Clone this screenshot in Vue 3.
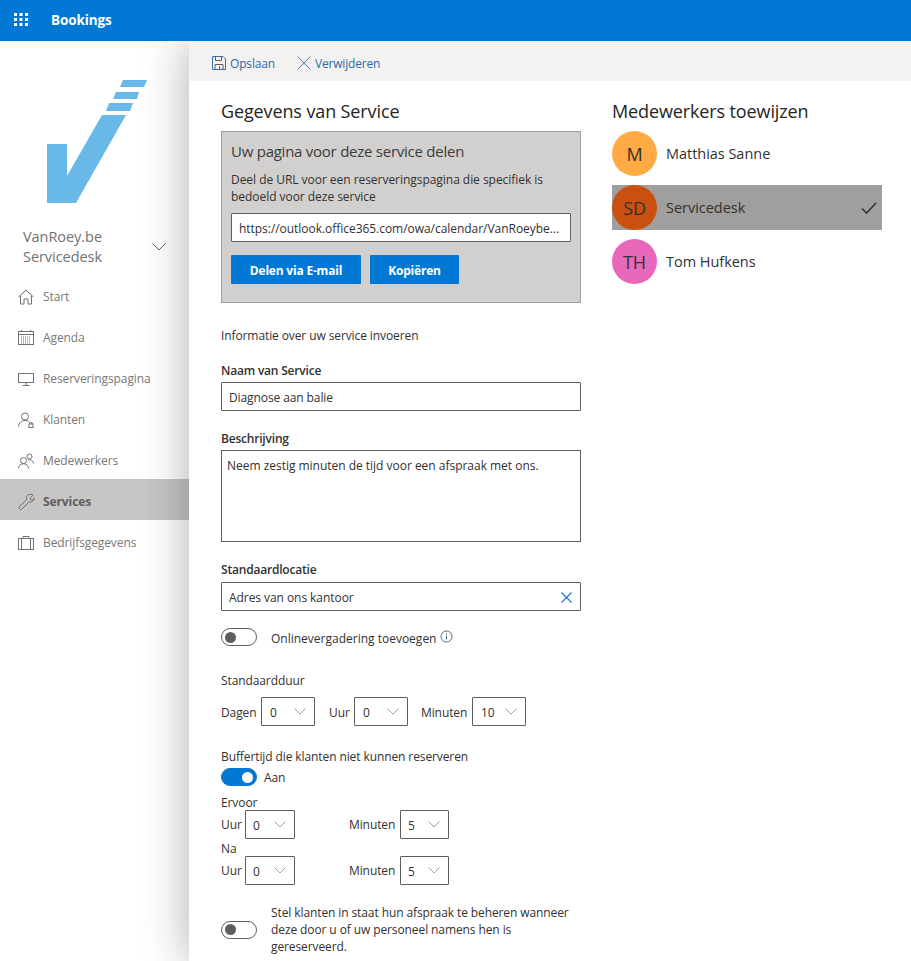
<script setup>
const nav = [
  { label: 'Start', icon: 'home' },
  { label: 'Agenda', icon: 'cal' },
  { label: 'Reserveringspagina', icon: 'screen' },
  { label: 'Klanten', icon: 'client' },
  { label: 'Medewerkers', icon: 'people' },
  { label: 'Services', icon: 'wrench', active: true },
  { label: 'Bedrijfsgegevens', icon: 'case' }
]
const staff = [
  { initials: 'M', name: 'Matthias Sanne', color: '#ffaa44' },
  { initials: 'SD', name: 'Servicedesk', color: '#ca5010', selected: true },
  { initials: 'TH', name: 'Tom Hufkens', color: '#e767bb' }
]
</script>

<template>
  <div class="app">
    <header class="topbar">
      <svg class="waffle" width="16" height="14" viewBox="0 0 16 14">
        <g fill="#fff">
          <rect x="1" y="0" width="3" height="3" /><rect x="6.5" y="0" width="3" height="3" /><rect x="12" y="0" width="3" height="3" />
          <rect x="1" y="5" width="3" height="3" /><rect x="6.5" y="5" width="3" height="3" /><rect x="12" y="5" width="3" height="3" />
          <rect x="1" y="10" width="3" height="3" /><rect x="6.5" y="10" width="3" height="3" /><rect x="12" y="10" width="3" height="3" />
        </g>
      </svg>
      <span class="brand">Bookings</span>
    </header>

    <div class="body">
      <aside class="sidebar">
        <svg class="logo" width="100" height="123" viewBox="0 0 100 123">
          <g fill="#68b8e8">
            <polygon points="0,64 20,64 20,96 55,35 79,35 29,123 0,123" />
            <polygon points="59,31 83,31 86,23 62,23" />
            <polygon points="66,19 90,19 92,12 69,12" />
            <polygon points="73,7 97,7 100,0 76,0" />
          </g>
        </svg>
        <div class="biz">
          <div class="biz-name">VanRoey.be<br />Servicedesk</div>
          <svg class="biz-chev" width="14" height="8" viewBox="0 0 14 8"><path d="M0.5 0.5 7 7 13.5 0.5" fill="none" stroke="#605e5c" /></svg>
        </div>
        <nav class="nav">
          <div v-for="item in nav" :key="item.label" class="nav-item" :class="{ active: item.active }">
            <svg class="nav-icon" width="18" height="18" viewBox="0 0 18 18" fill="none" stroke="#737170" stroke-width="1">
              <template v-if="item.icon === 'home'">
                <path d="M1.5 9 9 2.2 16.5 9M3.5 7.5V16H7V11H11V16H14.5V7.5" />
              </template>
              <template v-else-if="item.icon === 'cal'">
                <rect x="1.5" y="2.5" width="15" height="13" />
                <path d="M1.5 5.5H16.5M4.5 1V3M13.5 1V3" />
                <path d="M4 8H14M4 10H14M4 12H14M4 14H14" stroke-dasharray="1 1" />
              </template>
              <template v-else-if="item.icon === 'screen'">
                <rect x="1.5" y="3.5" width="15" height="9" />
                <path d="M9 12.5V15.5M5.5 15.5H12.5" />
              </template>
              <template v-else-if="item.icon === 'client'">
                <circle cx="8" cy="5.5" r="3.5" />
                <path d="M1.5 15.5C2 11.5 4.5 9.5 8 9.5C10 9.5 11.5 10 12.5 11" />
                <rect x="12" y="13" width="4" height="3.5" />
                <path d="M12.8 13V11.8H15.2V13" />
              </template>
              <template v-else-if="item.icon === 'people'">
                <circle cx="6.5" cy="8.5" r="3" />
                <circle cx="12.5" cy="4.5" r="2.5" />
                <path d="M1.5 16.5C1.5 13.5 3.5 11.8 6.5 11.8C9.5 11.8 11.2 13.5 11.5 16.5M11 8C13.5 7.2 16 8.5 16.5 11.5" />
              </template>
              <template v-else-if="item.icon === 'wrench'">
                <path d="M11 1.8C13 1 15 1.3 16 2.2L13 5.2 14 7 16.2 7.2 17 5C17.3 7.5 15 9.8 12 9L4.5 16.5C3.5 17.3 1.2 15.2 2 14L9.8 6.5C9.2 4.5 9.5 2.8 11 1.8Z" />
              </template>
              <template v-else>
                <rect x="1.5" y="4.5" width="15" height="11" />
                <path d="M4.5 4.5V15.5M13.5 4.5V15.5M6 4.5V2.5H12V4.5" />
              </template>
            </svg>
            <span>{{ item.label }}</span>
          </div>
        </nav>
      </aside>

      <main class="panel">
        <div class="commandbar">
          <span class="cmd">
            <svg width="14" height="14" viewBox="0 0 14 14" fill="none" stroke="#3a6ea5" stroke-width="1">
              <path d="M0.5 0.5H11L13.5 3V13.5H0.5Z" />
              <path d="M3.5 0.5V4.5H9.5V0.5M3 13.5V8.5H11V13.5M7.5 10V13.5" stroke="#605e5c" />
            </svg>
            Opslaan
          </span>
          <span class="cmd cmd-del">
            <svg width="14" height="14" viewBox="0 0 14 14" fill="none" stroke="#5a7fa8" stroke-width="1"><path d="M0.5 0.5 13.5 13.5M13.5 0.5 0.5 13.5" /></svg>
            Verwijderen
          </span>
        </div>

        <div class="content">
          <section class="form">
            <h2 class="heading">Gegevens van Service</h2>
            <div class="share">
              <div class="share-title">Uw pagina voor deze service delen</div>
              <p class="share-text">Deel de URL voor een reserveringspagina die specifiek is bedoeld voor deze service</p>
              <div class="field share-url">https://outlook.office365.com/owa/calendar/VanRoeybe...</div>
              <div class="share-btns">
                <button class="btn btn-mail">Delen via E-mail</button>
                <button class="btn btn-copy">Kopiëren</button>
              </div>
            </div>

            <p class="intro">Informatie over uw service invoeren</p>

            <label class="label l-name">Naam van Service</label>
            <div class="field">Diagnose aan balie</div>

            <label class="label l-desc">Beschrijving</label>
            <div class="area">Neem zestig minuten de tijd voor een afspraak met ons.</div>

            <label class="label l-loc">Standaardlocatie</label>
            <div class="field field-x">
              <span>Adres van ons kantoor</span>
              <svg width="11" height="11" viewBox="0 0 11 11" fill="none" stroke="#1a6fd0" stroke-width="1.1"><path d="M0.5 0.5 10.5 10.5M10.5 0.5 0.5 10.5" /></svg>
            </div>

            <div class="toggle-row online">
              <span class="toggle"><i></i></span>
              <span class="toggle-text">Onlinevergadering toevoegen</span>
              <svg class="info" width="13" height="13" viewBox="0 0 13 13" fill="none" stroke="#4a6a8a"><circle cx="6.5" cy="6.5" r="5.5" /><path d="M6.5 5.5V9.5M6.5 3.2V4.4" /></svg>
            </div>

            <div class="plain duration-label">Standaardduur</div>
            <div class="sel-row duration">
              <span class="sel-label w40">Dagen</span>
              <span class="sel w54"><b>0</b><svg width="12" height="7" viewBox="0 0 12 7"><path d="M0.5 0.5 6 6 11.5 0.5" fill="none" stroke="#a19f9d" /></svg></span>
              <span class="sel-label w25 ml14">Uur</span>
              <span class="sel w54"><b>0</b><svg width="12" height="7" viewBox="0 0 12 7"><path d="M0.5 0.5 6 6 11.5 0.5" fill="none" stroke="#a19f9d" /></svg></span>
              <span class="sel-label w51 ml13">Minuten</span>
              <span class="sel w54"><b>10</b><svg width="12" height="7" viewBox="0 0 12 7"><path d="M0.5 0.5 6 6 11.5 0.5" fill="none" stroke="#a19f9d" /></svg></span>
            </div>

            <div class="plain buffer-label">Buffertijd die klanten niet kunnen reserveren</div>
            <div class="toggle-row on-row">
              <span class="toggle on"><i></i></span>
              <span class="aan">Aan</span>
            </div>

            <div class="plain ervoor">Ervoor</div>
            <div class="sel-row">
              <span class="sel-label w24">Uur</span>
              <span class="sel w50"><b>0</b><svg width="12" height="7" viewBox="0 0 12 7"><path d="M0.5 0.5 6 6 11.5 0.5" fill="none" stroke="#a19f9d" /></svg></span>
              <span class="sel-label w51 ml54">Minuten</span>
              <span class="sel w49"><b>5</b><svg width="12" height="7" viewBox="0 0 12 7"><path d="M0.5 0.5 6 6 11.5 0.5" fill="none" stroke="#a19f9d" /></svg></span>
            </div>
            <div class="plain na">Na</div>
            <div class="sel-row">
              <span class="sel-label w24">Uur</span>
              <span class="sel w50"><b>0</b><svg width="12" height="7" viewBox="0 0 12 7"><path d="M0.5 0.5 6 6 11.5 0.5" fill="none" stroke="#a19f9d" /></svg></span>
              <span class="sel-label w51 ml54">Minuten</span>
              <span class="sel w49"><b>5</b><svg width="12" height="7" viewBox="0 0 12 7"><path d="M0.5 0.5 6 6 11.5 0.5" fill="none" stroke="#a19f9d" /></svg></span>
            </div>

            <div class="toggle-row manage">
              <span class="toggle"><i></i></span>
              <span class="manage-text">Stel klanten in staat hun afspraak te beheren wanneer deze door u of uw personeel namens hen is gereserveerd.</span>
            </div>
          </section>

          <section class="staff">
            <h2 class="heading">Medewerkers toewijzen</h2>
            <div class="staff-list">
              <div v-for="p in staff" :key="p.name" class="person" :class="{ selected: p.selected }">
                <span class="avatar" :style="{ background: p.color }">{{ p.initials }}</span>
                <span class="person-name">{{ p.name }}</span>
                <svg v-if="p.selected" class="check" width="16" height="12" viewBox="0 0 16 12"><path d="M1 6.5 5.5 11 15 1" fill="none" stroke="#323130" stroke-width="1.5" /></svg>
              </div>
            </div>
          </section>
        </div>
      </main>
    </div>
  </div>
</template>

<style>
html, body { margin: 0; padding: 0; overflow: hidden; background: #fff; }
</style>

<style scoped>
.app {
  width: 911px;
  height: 961px;
  overflow: hidden;
  display: flex;
  flex-direction: column;
  font-family: "Open Sans", "Noto Sans", sans-serif;
  font-size: 12px;
  letter-spacing: -0.1px;
  color: #323130;
}
.topbar {
  height: 41px;
  box-sizing: border-box;
  padding: 0 0 2px 13px;
  flex: none;
  background: #0078d4;
  display: flex;
  align-items: center;
  color: #fff;
  position: relative;
  z-index: 3;
}
.waffle { margin-right: 22px; }
.brand { font-size: 13.5px; font-weight: 700; letter-spacing: -0.1px; }

.body { flex: 1; display: flex; min-height: 0; }

.sidebar { width: 189px; flex: none; color: #605e5c; background: #fff; }
.logo { display: block; margin: 39px 0 0 47px; }
.biz {
  display: flex;
  align-items: center;
  justify-content: space-between;
  padding: 0 23px 0 23px;
  margin-top: 24px;
  color: #73716f;
}
.biz-name { font-size: 14.5px; line-height: 20px; letter-spacing: -0.05px; }
.nav { margin-top: 7px; }
.nav-item {
  height: 41px;
  box-sizing: border-box;
  padding: 4px 0 0 17px;
  display: flex;
  align-items: center;
  gap: 8px;
  color: #7a7876;
}
.nav-icon { flex: none; }
.nav-item.active { background: #c8c6c4; font-weight: 700; color: #605e5c; }

.panel {
  flex: 1;
  min-width: 0;
  background: #fff;
  box-shadow: 0 0 44px rgba(0, 0, 0, 0.32);
  position: relative;
  z-index: 2;
}
.commandbar {
  height: 40px;
  box-sizing: border-box;
  padding: 4px 0 0 23px;
  background: #f3f2f1;
  display: flex;
  align-items: center;
  color: #2b6aa8;
  letter-spacing: -0.17px;
}
.cmd { display: inline-flex; align-items: center; gap: 4px; }
.cmd-del { margin-left: 22px; }

.content { display: flex; padding-left: 32px; }
.form { width: 360px; flex: none; }
.staff { width: 270px; margin-left: 31px; flex: none; }

.heading {
  margin: 18px 0 0;
  font-size: 18px;
  font-weight: 400;
  line-height: 24px;
  letter-spacing: -0.12px;
  color: #252423;
}
.share {
  margin-top: 8px;
  height: 172px;
  box-sizing: border-box;
  background: #d2d0ce;
  border: 1px solid #a19f9d;
  padding: 9px;
}
.share-title { font-size: 15px; line-height: 21px; letter-spacing: -0.25px; color: #3b3a39; }
.share-text { margin: 9px 0 0; line-height: 17px; width: 330px; letter-spacing: -0.04px; }
.field {
  height: 29px;
  box-sizing: border-box;
  border: 1px solid #605e5c;
  border-radius: 1px;
  background: #fff;
  padding: 1px 7px 0;
  display: flex;
  align-items: center;
  white-space: nowrap;
}
.share-url { margin-top: 8px; letter-spacing: -0.04px; }
.share-btns { display: flex; gap: 9px; margin-top: 13px; }
.btn {
  height: 29px;
  border: 0;
  border-radius: 1px;
  background: #0078d4;
  color: #fff;
  font: 700 12px "Open Sans", sans-serif;
  letter-spacing: -0.2px;
  padding: 2px 0 0;
}
.btn-mail { width: 130px; }
.btn-copy { width: 89px; }

.intro { margin: 24px 0 0; line-height: 17px; }
.label { display: block; font-weight: 600; line-height: 17px; letter-spacing: -0.2px; color: #323130; }
.l-name { margin-top: 18px; margin-bottom: 3px; }
.l-desc { margin-top: 19px; margin-bottom: 3px; }
.area {
  height: 92px;
  box-sizing: border-box;
  border: 1px solid #605e5c;
  padding: 7px 5px 5px;
  line-height: 16px;
  letter-spacing: -0.02px;
}
.l-loc { margin-top: 19px; margin-bottom: 4px; }
.field-x { justify-content: space-between; padding-right: 8px; letter-spacing: -0.06px; }

.toggle-row { display: flex; align-items: center; }
.toggle {
  width: 36px;
  height: 18px;
  box-sizing: border-box;
  border: 1px solid #605e5c;
  border-radius: 9px;
  display: flex;
  align-items: center;
  padding: 0 3px;
  flex: none;
}
.toggle i { width: 11px; height: 11px; border-radius: 50%; background: #605e5c; display: block; }
.toggle.on { background: #0078d4; border-color: #0078d4; justify-content: flex-end; }
.toggle.on i { background: #fff; }
.online { margin-top: 17px; height: 18px; }
.toggle-text { margin-left: 14px; padding-top: 2px; letter-spacing: 0; }
.info { margin-left: 4px; margin-top: -2px; }

.plain { line-height: 17px; }
.duration-label { margin-top: 26px; }
.sel-row { display: flex; align-items: center; height: 29px; }
.duration { margin-top: 8px; }
.duration .sel-label { padding-top: 2px; }
.sel {
  height: 29px;
  box-sizing: border-box;
  border: 1px solid #605e5c;
  border-radius: 1px;
  display: flex;
  align-items: center;
  justify-content: space-between;
  padding: 0 8px 0 7px;
  flex: none;
}
.sel b { font-weight: 400; padding-top: 2px; }
.sel svg { margin-bottom: 1px; }
.w54 { width: 54px; padding-left: 8px; }
.w50 { width: 50px; }
.w49 { width: 49px; }
.w40 { width: 40px; flex: none; }
.w25 { width: 25px; flex: none; }
.w24 { width: 24px; flex: none; }
.w51 { width: 51px; flex: none; }
.ml14 { margin-left: 14px; }
.ml13 { margin-left: 13px; }
.ml54 { margin-left: 54px; }
.buffer-label { margin-top: 22px; }
.on-row { margin-top: 3px; height: 18px; }
.aan { margin-left: 7px; }
.ervoor { margin-top: 8px; margin-bottom: -1px; }
.na { margin-top: 1px; margin-bottom: -1px; }
.manage { margin-top: 19px; }
.manage-text { margin-left: 14px; width: 310px; line-height: 17px; }

.staff-list { margin-top: 8px; display: flex; flex-direction: column; gap: 9px; }
.person { height: 45px; display: flex; align-items: center; position: relative; }
.person.selected { background: #a19f9d; }
.avatar {
  width: 45px;
  height: 45px;
  border-radius: 50%;
  flex: none;
  display: flex;
  align-items: center;
  justify-content: center;
  font-size: 18px;
  letter-spacing: -0.2px;
  color: #323130;
}
.person-name { margin-left: 9px; font-size: 14.5px; letter-spacing: -0.03px; }
.check { margin-left: auto; margin-right: 5px; }
</style>
